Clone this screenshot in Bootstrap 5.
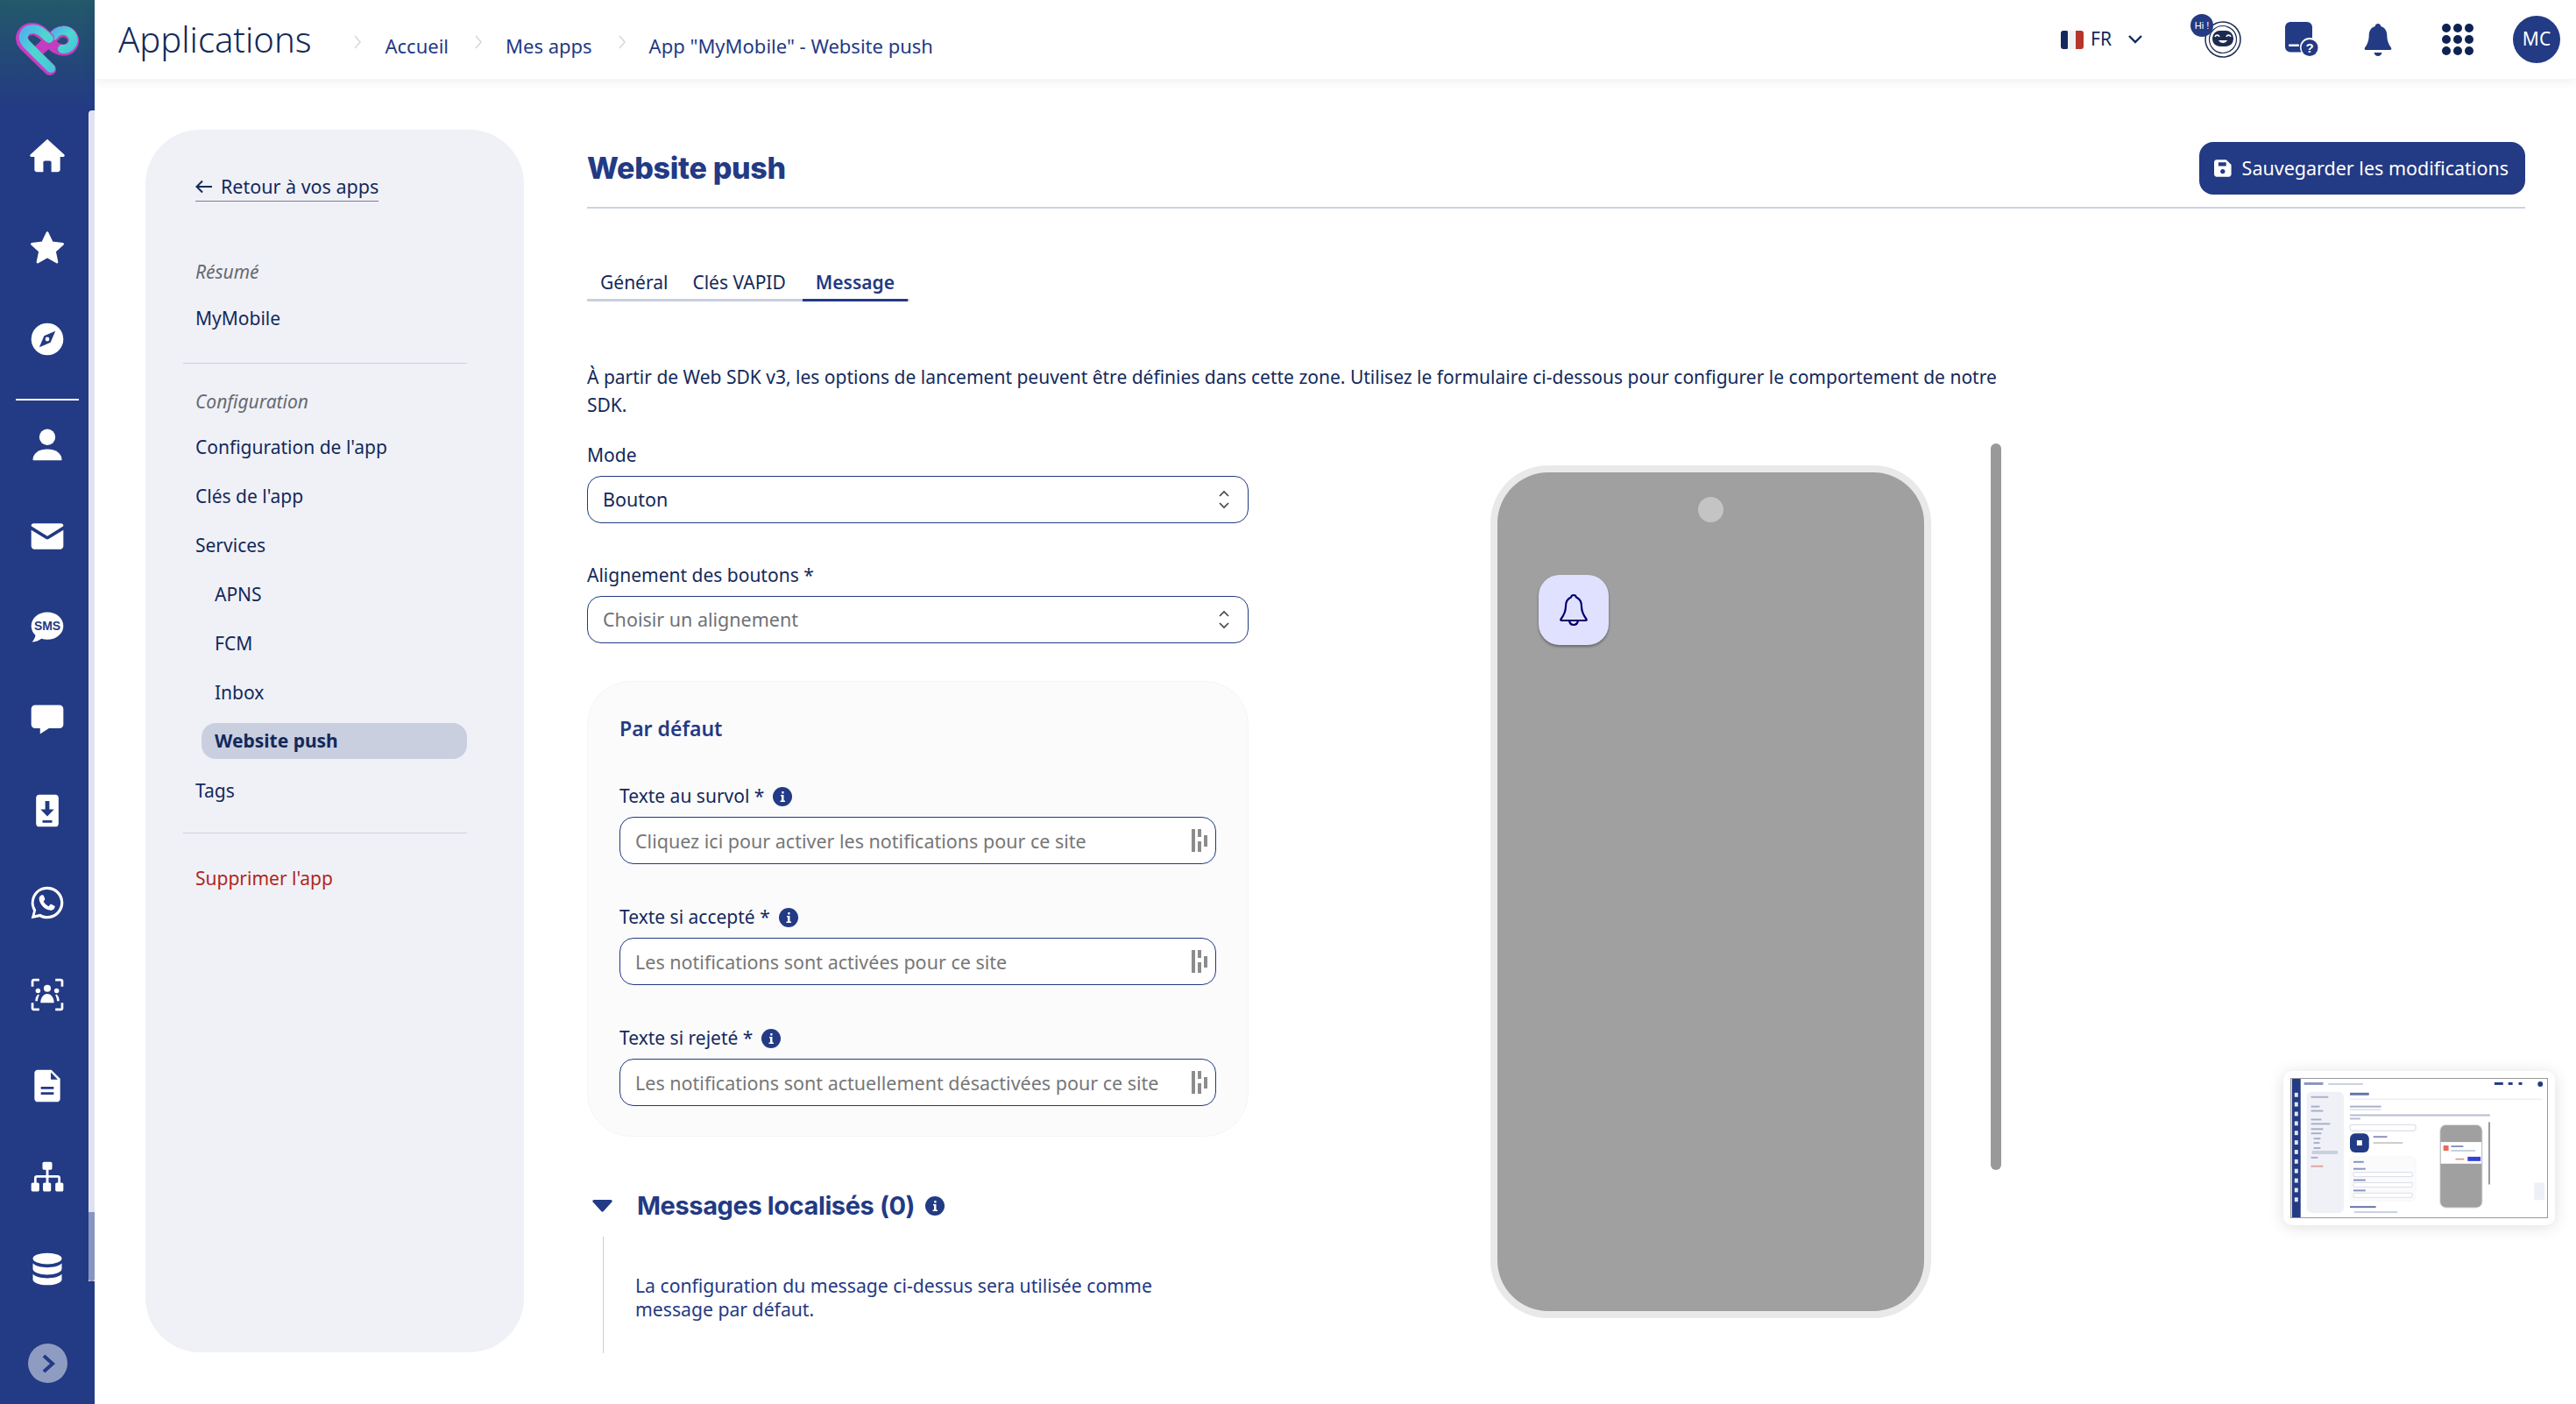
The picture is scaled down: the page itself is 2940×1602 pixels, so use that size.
<!DOCTYPE html>
<html lang="fr">
<head>
    <meta charset="UTF-8">
    <meta name="viewport" content="width=device-width, initial-scale=1.0">
    <title>Applications</title>
    <link href="https://cdn.jsdelivr.net/npm/bootstrap@5.3.2/dist/css/bootstrap.min.css" rel="stylesheet">
    <style>
        html, body { height: 100%; overflow: hidden; }
        body { font-family: "Noto Sans", "Open Sans", sans-serif; font-size: 21px; color: #13295a; background: #fff; }
        .app-shell { width: 2940px; height: 1602px; position: relative; overflow: hidden; }

        /* sidebar */
        .side-rail { width: 108px; height: 1602px; flex: none; background: linear-gradient(180deg, #23596a 0, #233a84 125px); position: relative; }
        .rail-logo { height: 126px; padding-top: 15px; }
        .rail-track { position: absolute; left: 101px; top: 126px; width: 7px; bottom: 140px; background: #e0e3ef; border-radius: 4px 0 0 0; }
        .rail-thumb { position: absolute; left: 0; right: 0; top: 1257px; height: 79px; background: #8a95bf; border-radius: 0 0 4px 4px; }
        .rail-btn { height: 104.6px; display: flex; align-items: center; justify-content: center; }
        .rail-btn svg { width: 44px; height: 44px; fill: #fff; }
        .rail-line { width: 72px; height: 2px; background: #fff; margin: 15px 0 -2px 18px; }
        .rail-toggle { position: absolute; left: 32px; top: 1533px; width: 45px; height: 45px; border-radius: 50%; background: #8f9cc2; display: flex; align-items: center; justify-content: center; }

        /* top bar */
        .top-head { height: 90px; padding: 0 18px 0 27px; background: #fff; box-shadow: 0 2px 12px rgba(20, 30, 70, .08); position: relative; z-index: 2; }
        .top-title { font-size: 40px; font-weight: 300; color: #13295a; line-height: 1; margin: 0 47px 0 0; }
        .crumb-bar { margin: 14px 0 0; font-size: 22px; }
        .crumb-bar .breadcrumb-item { display: flex; align-items: center; padding: 0; color: #233a84; }
        .crumb-bar .breadcrumb-item + .breadcrumb-item { padding: 0; }
        .crumb-bar .breadcrumb-item::before, .crumb-bar .breadcrumb-item + .breadcrumb-item::before { content: ""; float: none; padding: 0; width: 12px; height: 16px; margin: -8px 25px 0 28px; background: url("data:image/svg+xml,%3Csvg xmlns='http://www.w3.org/2000/svg' viewBox='0 0 12 16'%3E%3Cpath d='M3 1l6 7-6 7' fill='none' stroke='%23d5d8de' stroke-width='1.6'/%3E%3C/svg%3E") no-repeat center; }
        .crumb-bar .breadcrumb-item:first-child::before { margin-left: 0; }
        .crumb-bar a { color: #233a84; text-decoration: none; }
        .lang-pick { font-size: 21px; margin-right: 54px; width: 94px; }
        .head-tool { display: block; flex: none; }

        /* left panel */
        .side-panel { width: 432px; height: 1395px; flex: none; margin: 58px 0 0 58px; padding: 49px 65px 0 43px; border-radius: 62px; background: #f0f1f7; }
        .back-link { display: inline-flex; align-items: center; gap: 9px; margin-left: 14px; height: 33px; border-bottom: 1px solid #7b7f8c; color: #13295a; text-decoration: none; font-size: 21.5px; }
        .menu-row { display: block; height: 41px; line-height: 42px; padding-left: 14px; color: #13295a; text-decoration: none; margin-bottom: 15px; white-space: nowrap; }
        .menu-cap { font-style: italic; color: #666a70; }
        .menu-sub { padding-left: 36px; }
        .menu-on { margin-left: 21px; padding-left: 15px; line-height: 41px; font-weight: 700; background: #cacfe0; border-radius: 16px; }
        .menu-sep { margin: 0; opacity: 1; border-top: 1px solid #cdd0e0; }
        .menu-del { color: #b1261c; }

        /* main */
        .main-col { width: 2212px; flex: none; margin: 58px 0 0 72px; }
        .page-head { height: 90px; padding-top: 14px; border-bottom: 2px solid #ccd2e4; }
        .page-title { font-family: "Inter", sans-serif; font-size: 34px; font-weight: 800; color: #233a84; margin: 0; letter-spacing: -.3px; }
        .save-btn { height: 60px; width: 372px; padding: 0 19px 0 17px; background: #233a84; border: 0; border-radius: 16px; font-size: 21.5px; color: #fff; gap: 12px; white-space: nowrap; }
        .save-btn:hover { background: #233a84; color: #fff; }
        .tab-strip { width: 368px; margin: 56px 0 70px; border-bottom: 3px solid #c9cfe0; flex-wrap: nowrap; }
        .tab-strip .nav-link { padding: 0 15px; height: 50px; line-height: 56px; margin-bottom: -3px; border: 0; border-bottom: 3px solid transparent; border-radius: 0; background: none; color: #13295a; white-space: nowrap; }
        .tab-strip .nav-item:nth-child(2) .nav-link { padding: 0 19px 0 13px; }
        .tab-strip .nav-link.active { color: #233a84; font-weight: 600; border-bottom-color: #233a84; background: none; }
        .intro-text { width: 1620px; line-height: 32px; margin: 0 0 28px; }
        .form-col { width: 755px; flex: none; }
        .field-lab { display: flex; align-items: center; gap: 10px; height: 28px; margin-bottom: 9px; color: #13295a; }
        .field-sel, .field-inp { height: 54px; border: 1.5px solid #233a84; border-radius: 16px; font-size: 21.5px; padding: 0 54px 0 17px; color: #13295a; background-color: #fff; }
        .field-sel { background-image: url("data:image/svg+xml,%3Csvg xmlns='http://www.w3.org/2000/svg' viewBox='0 0 14 24'%3E%3Cpath d='M2 8l5-5 5 5M2 16l5 5 5-5' fill='none' stroke='%23444' stroke-width='1.6'/%3E%3C/svg%3E"); background-size: 14px 24px; background-position: right 20px center; }
        .field-sel.is-empty { color: #6f7276; }
        .field-inp::placeholder { color: #777; opacity: 1; }
        .field-box { position: relative; }
        .field-mark { position: absolute; right: 9px; top: 14px; }
        .field-group { margin-bottom: 46px; }
        .default-box { height: 520px; margin: -3px 0 59px; padding: 40px 36px 0; border: 1px solid #f5f5f7; border-radius: 50px; background: #fbfbfc; }
        .default-title { height: 28px; line-height: 26px; font-size: 23px; font-weight: 600; color: #233a84; margin-bottom: 49px; }
        .inner-group { margin-bottom: 47px; }
        .inner-group:last-child { margin-bottom: 0; }
        .local-head { height: 40px; gap: 0; }
        .local-title { font-family: "Inter", sans-serif; font-size: 29px; font-weight: 700; color: #233a84; margin: 0 12px 0 28px; letter-spacing: -.4px; }
        .local-body { margin: 15px 0 0 18px; padding: 42px 20px 37px 36px; border-left: 1px solid #c9cfe0; line-height: 27px; width: 680px; font-size: 21.2px; color: #233a84; }

        /* phone preview */
        .preview-col { padding-left: 276px; }
        .phone-shell { width: 503px; height: 973px; margin-top: 25px; padding: 8px; border-radius: 66px; background: #e9e9e9; flex: none; }
        .phone-screen { height: 100%; padding-top: 28px; border-radius: 58px; background: #9fa09f; position: relative; }
        .phone-cam { width: 29px; height: 29px; margin: 0 auto; border-radius: 50%; background: #c4c4c4; }
        .phone-bell { position: absolute; left: 47px; top: 117px; width: 80px; height: 80px; border-radius: 24px; background: #e0e1ff; box-shadow: 0 2px 3px rgba(0, 0, 0, .35); display: flex; align-items: center; justify-content: center; }
        .preview-bar { width: 12px; height: 829px; margin-left: 68px; border-radius: 6px; background: #999; flex: none; }

        /* floating thumbnail */
        .mini-card { position: absolute; left: 2606px; top: 1222px; width: 310px; height: 176px; padding: 8px; background: #fff; border-radius: 10px; box-shadow: 0 2px 18px rgba(0, 0, 0, .13); }
        .mini-card svg { display: block; width: 294px; height: 160px; border: 1px solid #999; filter: blur(.4px); }
    </style>
</head>

<body>
<div class="app-shell d-flex">
    <!-- barre de navigation à gauche -->
    <aside class="side-rail">
        <div class="rail-logo d-flex justify-content-center">
            <svg width="90" height="80" viewBox="0 0 90 80">
                <defs>
                    <linearGradient id="logoA" x1="0" y1="0" x2="1" y2="1">
                        <stop offset="0" stop-color="#4fb4e8"/><stop offset=".5" stop-color="#4ed8cf"/><stop offset="1" stop-color="#46c8d8"/>
                    </linearGradient>
                </defs>
                <path d="M36 42 52 27C58 19 68 19 73 26 78 34 71 43 62 42 54 41 50 36 45 30" fill="none" stroke="#c43cc0" stroke-width="13" stroke-linecap="round"/>
                <path d="M52 26C58 18 68 18 73 25 78 33 71 42 62 41" fill="none" stroke="url(#logoA)" stroke-width="10" stroke-linecap="round"/>
                <path d="M48 64 19 36C12 28 18 18 28 18 36 18 40 24 46 29" fill="none" stroke="#c83cc4" stroke-width="14" stroke-linecap="round"/>
                <path d="M49 63 21 35C14 27 19 18 29 18 37 18 41 24 47 29" fill="none" stroke="url(#logoA)" stroke-width="10" stroke-linecap="round"/>
            </svg>
        </div>
        <div class="rail-track"><div class="rail-thumb"></div></div>
        <div class="rail-icons">
            <div class="rail-btn"><svg viewBox="0 0 24 24"><path fill-rule="evenodd" d="M12 1.500 22.500 11c.6.600.2 1.500-.6 1.500H20v8c0 1-.7 1.500-1.500 1.500h-13C4.700 22 4 21.500 4 20.500v-8H2.100c-.8 0-1.200-.9-.6-1.500zM10.500 15c-.6 0-1 .4-1 1v6h5v-6c0-.6-.4-1-1-1z"/></svg></div>
            <div class="rail-btn"><svg viewBox="0 0 24 24"><path stroke="#fff" stroke-width="1.500" stroke-linejoin="round" d="m12 2.500 2.900 6.200 6.700.8-5 4.600 1.400 6.700L12 17.400l-6 3.400 1.400-6.700-5-4.600 6.700-.8z"/></svg></div>
            <div class="rail-btn"><svg viewBox="0 0 24 24"><path fill-rule="evenodd" d="M12 2a10 10 0 1 0 0 20 10 10 0 0 0 0-20zm5 5-3 7-7 3 3-7zm-5 3.700a1.300 1.300 0 1 0 0 2.600 1.300 1.300 0 0 0 0-2.600z"/></svg></div>
            <div class="rail-line"></div>
            <div class="rail-btn"><svg viewBox="0 0 24 24"><circle cx="12" cy="7.500" r="5"/><path d="M3 21.500c0-4 4-6.500 9-6.500s9 2.500 9 6.500c0 .5-.3.5-.8.500H3.800c-.5 0-.8 0-.8-.5z"/></svg></div>
            <div class="rail-btn"><svg viewBox="0 0 24 24"><path d="M3.500 4h17c1 0 1.500.6 1.500 1.200 0 .3-.1.5-.4.7L12 11.800 2.400 5.900C2.100 5.700 2 5.500 2 5.200 2 4.600 2.500 4 3.500 4zM2 8l9.200 5.700c.5.300 1.100.3 1.600 0L22 8v10c0 1.100-.9 2-2 2H4c-1.100 0-2-.9-2-2z"/></svg></div>
            <div class="rail-btn"><svg viewBox="0 0 24 24"><path d="M12 2.500c5.500 0 10 3.700 10 8.500s-4.500 8.500-10 8.500c-1.300 0-2.500-.2-3.700-.6-1.500 1.200-3.700 2.100-5.800 2.100 1.100-1.200 2-2.800 2.100-4.200C3.100 15.400 2 13.300 2 11c0-4.800 4.500-8.500 10-8.500z"/><text x="12" y="13.800" text-anchor="middle" font-family="Liberation Sans, sans-serif" font-size="7.600" font-weight="700" fill="#233a84">SMS</text></svg></div>
            <div class="rail-btn"><svg viewBox="0 0 24 24"><path d="M4.500 3h15C21 3 22 4 22 5.500v9.500c0 1.500-1 2.500-2.500 2.500H13L7.500 21v-3.500h-3C3 17.500 2 16.500 2 15V5.500C2 4 3 3 4.500 3z"/></svg></div>
            <div class="rail-btn"><svg viewBox="0 0 24 24"><path fill-rule="evenodd" d="M7 2h10c1.200 0 2 .8 2 2v16c0 1.200-.8 2-2 2H7c-1.200 0-2-.8-2-2V4c0-1.200.8-2 2-2zm3.700 4v5.200H7.800L12 15.500l4.200-4.300h-2.900V6zM9 18v1.500h6V18z"/></svg></div>
            <div class="rail-btn"><svg viewBox="0 0 24 24"><path fill-rule="evenodd" d="M12 2a10 10 0 0 1 0 20c-1.700 0-3.300-.4-4.800-1.200L2 22l1.300-5C2.500 15.500 2 13.800 2 12A10 10 0 0 1 12 2zm0 1.800A8.200 8.200 0 0 0 5 16.500l-.8 3.300 3.400-.9A8.200 8.200 0 1 0 12 3.800z"/><path d="M8.800 7.200c.5 0 .8.100 1 .6l.7 1.700c.1.300 0 .6-.2.800l-.7.9c.7 1.300 1.800 2.400 3.200 3.100l.9-1.100c.2-.2.500-.3.800-.2l1.800.9c.3.100.5.400.4.800-.2 1.300-1.400 2.100-2.600 2.100-3.400-.2-7-3.700-7.200-7.100 0-1.100.7-2.500 1.900-2.500z"/></svg></div>
            <div class="rail-btn"><svg viewBox="0 0 24 24"><path d="M2 7V3.500C2 2.700 2.700 2 3.500 2H7v1.500H3.500V7zM17 2h3.500c.8 0 1.500.7 1.500 1.500V7h-1.500V3.500H17zM2 17h1.500v3.500H7V22H3.500C2.700 22 2 21.300 2 20.500zM20.500 17H22v3.500c0 .8-.7 1.500-1.500 1.500H17v-1.500h3.500z"/><circle cx="12" cy="8" r="2.200"/><circle cx="6.200" cy="9.500" r="1.500"/><circle cx="17.800" cy="9.500" r="1.500"/><path d="M7.800 17c0-3 1.800-5.500 4.200-5.500s4.200 2.500 4.200 5.500zM4.500 16c0-1.800.6-3.500 1.800-4.300l.7.400C6.400 13.300 6 14.600 6 16zM19.500 16c0-1.800-.6-3.500-1.800-4.300l-.7.400c.6 1.200 1 2.500 1 3.900z"/></svg></div>
            <div class="rail-btn"><svg viewBox="0 0 24 24"><path fill-rule="evenodd" d="M6 2h8.500L20 7.500V20c0 1.100-.9 2-2 2H6c-1.100 0-2-.9-2-2V4c0-1.100.9-2 2-2zm8.200 1.500V8h4.300zM8 12.500V14h8v-1.500zM8 16v1.500h8V16z"/></svg></div>
            <div class="rail-btn"><svg viewBox="0 0 24 24"><path d="M10 2h4c.6 0 1 .4 1 1v3c0 .6-.4 1-1 1h-1.200v3.300h5.700c1 0 1.700.7 1.700 1.700v3h.8c.6 0 1 .4 1 1v3.500c0 .6-.4 1-1 1h-3c-.6 0-1-.4-1-1V16c0-.6.4-1 1-1h.7v-3c0-.2-.1-.2-.2-.2h-5.700V15h.5c.6 0 1 .4 1 1v3.500c0 .6-.4 1-1 1h-3c-.6 0-1-.4-1-1V16c0-.6.4-1 1-1h.9v-3.200H5.500c-.1 0-.2 0-.2.200v3H6c.6 0 1 .4 1 1v3.500c0 .6-.4 1-1 1H3c-.6 0-1-.4-1-1V16c0-.6.4-1 1-1h.8v-3c0-1 .7-1.700 1.700-1.700h5.700V7H10c-.6 0-1-.4-1-1V3c0-.6.4-1 1-1z"/></svg></div>
            <div class="rail-btn"><svg viewBox="0 0 24 24"><ellipse cx="12" cy="5.500" rx="9" ry="3.500"/><path d="M3 8.500c1.500 1.700 5 2.500 9 2.500s7.500-.8 9-2.500V12c0 1.900-4 3.500-9 3.500S3 13.900 3 12zM3 15.200c1.500 1.700 5 2.500 9 2.500s7.500-.8 9-2.500v3.300c0 1.900-4 3.500-9 3.500s-9-1.600-9-3.500z"/></svg></div>
        </div>
        <div class="rail-toggle">
            <svg width="20" height="24" viewBox="0 0 20 24"><path d="M5 3l10 9-10 9" fill="none" stroke="#233a84" stroke-width="4"/></svg>
        </div>
    </aside>

    <div class="flex-grow-1">
        <!-- barre du haut -->
        <header class="top-head d-flex align-items-center">
            <h1 class="top-title">Applications</h1>
            <nav aria-label="breadcrumb">
                <ol class="breadcrumb crumb-bar">
                    <li class="breadcrumb-item"><a href="#">Accueil</a></li>
                    <li class="breadcrumb-item"><a href="#">Mes apps</a></li>
                    <li class="breadcrumb-item active">App "MyMobile" - Website push</li>
                </ol>
            </nav>
            <div class="ms-auto d-flex align-items-center">
                <div class="lang-pick d-flex align-items-center">
                    <svg class="head-tool" width="26" height="21" viewBox="0 0 26 21"><rect width="9" height="21" fill="#13295a" rx="3"/><rect x="8" width="10" height="21" fill="#f2f2f5"/><path d="M17 0h6c2 0 3 1 3 3v15c0 2-1 3-3 3h-6z" fill="#b5352b"/></svg>
                    <span class="ms-2">FR</span>
                    <svg class="head-tool ms-auto" width="18" height="12" viewBox="0 0 18 12"><path d="M2 2l7 7 7-7" fill="none" stroke="#13295a" stroke-width="2.400"/></svg>
                </div>
                <svg class="head-tool" width="64" height="60" viewBox="0 0 64 60">
                    <circle cx="37" cy="30" r="20" fill="none" stroke="#1d2b4f" stroke-width="1.500"/>
                    <circle cx="37" cy="30" r="15.500" fill="none" stroke="#1d2b4f" stroke-width="1.200"/>
                    <rect x="25" y="20" width="24" height="18" rx="8.500" fill="#1d2b4f"/>
                    <path d="M32 31c2 4 8 4 10 0z" fill="#fff"/>
                    <path d="M28 27c1-2.500 4-2.500 5 0M41 27c1-2.500 4-2.500 5 0" fill="none" stroke="#fff" stroke-width="1.600"/>
                    <circle cx="13" cy="14" r="13" fill="#233a84"/>
                    <text x="13" y="18" text-anchor="middle" font-family="Liberation Sans, sans-serif" font-size="11" fill="#fff">Hi !</text>
                </svg>
                <svg class="head-tool" style="margin-left:44px" width="38" height="40" viewBox="0 0 38 40"><rect width="31" height="34.500" rx="6" fill="#233a84"/><rect x="4" y="25.500" width="12" height="2.500" rx="1" fill="#fff"/><circle cx="28" cy="29" r="11" fill="#fff"/><circle cx="28" cy="29.500" r="9.500" fill="#233a84"/><text x="28" y="35" text-anchor="middle" font-family="Liberation Sans, sans-serif" font-size="15" font-weight="700" fill="#fff">?</text></svg>
                <svg class="head-tool" style="margin-left:52px" width="32" height="37" viewBox="0 0 32 37"><path d="M16 0c1.800 0 3 1.200 3.300 3 4.700 1.400 7 5.500 7 10.500 0 5 1.200 9 4.700 14 .8 1.200.2 2.500-1.200 2.500H2.200C.8 30 .2 28.700 1 27.500c3.500-5 4.700-9 4.700-14 0-5 2.300-9.100 7-10.500C13 1.200 14.200 0 16 0z" fill="#233a84"/><path d="M11.500 33h9c-.5 2.400-2.300 4-4.500 4s-4-1.600-4.500-4z" fill="#233a84"/></svg>
                <svg class="head-tool" style="margin-left:57px" width="36" height="36" viewBox="0 0 36 36" fill="#0e2353"><circle cx="5" cy="5" r="5"/><circle cx="18" cy="5" r="5"/><circle cx="31" cy="5" r="5"/><circle cx="5" cy="18" r="5"/><circle cx="18" cy="18" r="5"/><circle cx="31" cy="18" r="5"/><circle cx="5" cy="31" r="5"/><circle cx="18" cy="31" r="5"/><circle cx="31" cy="31" r="5"/></svg>
                <div class="rounded-circle d-flex align-items-center justify-content-center text-white flex-none" style="margin-left:45px;width:54px;height:54px;background:#233a84;">MC</div>
            </div>
        </header>

        <div class="d-flex">
            <!-- menu de l'app -->
            <nav class="side-panel">
                <a class="back-link" href="#">
                    <svg width="20" height="16" viewBox="0 0 20 16"><path d="M19 8H2M8 1.500 1.500 8 8 14.500" fill="none" stroke="#13295a" stroke-width="2"/></svg>
                    Retour à vos apps
                </a>
                <div class="menu-row menu-cap" style="margin-top:59px;margin-bottom:12px">Résumé</div>
                <a class="menu-row" style="margin-bottom:31px" href="#">MyMobile</a>
                <hr class="menu-sep">
                <div class="menu-row menu-cap" style="margin-top:22px;margin-bottom:11px">Configuration</div>
                <a class="menu-row" href="#">Configuration de l'app</a>
                <a class="menu-row" href="#">Clés de l'app</a>
                <a class="menu-row" href="#">Services</a>
                <a class="menu-row menu-sub" href="#">APNS</a>
                <a class="menu-row menu-sub" href="#">FCM</a>
                <a class="menu-row menu-sub" href="#">Inbox</a>
                <a class="menu-row menu-on" href="#">Website push</a>
                <a class="menu-row" style="margin-bottom:28px" href="#">Tags</a>
                <hr class="menu-sep">
                <a class="menu-row menu-del" style="margin-top:30px" href="#">Supprimer l'app</a>
            </nav>

            <main class="main-col">
                <div class="page-head d-flex justify-content-between align-items-start">
                    <h2 class="page-title" style="line-height:60px">Website push</h2>
                    <button class="btn save-btn d-flex align-items-center">
                        <svg width="20" height="20" viewBox="0 0 20 20"><path fill-rule="evenodd" d="M3 0h11l6 6v11c0 1.700-1.300 3-3 3H3c-1.700 0-3-1.300-3-3V3c0-1.700 1.300-3 3-3zm2 3v4.500h9V3zm5 8a2.700 2.700 0 1 0 0 5.400 2.700 2.700 0 0 0 0-5.400z" fill="#fff"/></svg>
                        Sauvegarder les modifications
                    </button>
                </div>

                <ul class="nav tab-strip">
                    <li class="nav-item"><a class="nav-link" href="#">Général</a></li>
                    <li class="nav-item"><a class="nav-link" href="#">Clés VAPID</a></li>
                    <li class="nav-item"><a class="nav-link active" href="#">Message</a></li>
                </ul>

                <p class="intro-text">À partir de Web SDK v3, les options de lancement peuvent être définies dans cette zone. Utilisez le formulaire ci-dessous pour configurer le comportement de notre SDK.</p>

                <div class="d-flex align-items-start">
                    <div class="form-col">
                        <div class="field-group">
                            <label class="field-lab">Mode</label>
                            <select class="form-select field-sel"><option>Bouton</option></select>
                        </div>
                        <div class="field-group">
                            <label class="field-lab">Alignement des boutons *</label>
                            <select class="form-select field-sel is-empty"><option>Choisir un alignement</option></select>
                        </div>

                        <div class="default-box">
                            <div class="default-title">Par défaut</div>
                            <div class="inner-group">
                                <label class="field-lab">Texte au survol *
                                    <svg width="22" height="22" viewBox="0 0 22 22"><circle cx="11" cy="11" r="11" fill="#233a84"/><path d="M9 9h3.500v6.500H14V17H8.500v-1.500H10v-5H9zM10.300 5h2.200v2.400h-2.200z" fill="#fff"/></svg>
                                </label>
                                <div class="field-box">
                                    <input class="form-control field-inp" type="text" placeholder="Cliquez ici pour activer les notifications pour ce site">
                                    <svg class="field-mark" width="20" height="26" viewBox="0 0 20 26"><g fill="#8c8c8c"><rect x="1" width="4" height="26"/><rect x="8" width="4" height="9"/><rect x="8" y="14" width="4" height="12"/><rect x="15" y="7" width="4" height="13"/></g></svg>
                                </div>
                            </div>
                            <div class="inner-group">
                                <label class="field-lab">Texte si accepté *
                                    <svg width="22" height="22" viewBox="0 0 22 22"><circle cx="11" cy="11" r="11" fill="#233a84"/><path d="M9 9h3.500v6.500H14V17H8.500v-1.500H10v-5H9zM10.300 5h2.200v2.400h-2.200z" fill="#fff"/></svg>
                                </label>
                                <div class="field-box">
                                    <input class="form-control field-inp" type="text" placeholder="Les notifications sont activées pour ce site">
                                    <svg class="field-mark" width="20" height="26" viewBox="0 0 20 26"><g fill="#8c8c8c"><rect x="1" width="4" height="26"/><rect x="8" width="4" height="9"/><rect x="8" y="14" width="4" height="12"/><rect x="15" y="7" width="4" height="13"/></g></svg>
                                </div>
                            </div>
                            <div class="inner-group">
                                <label class="field-lab">Texte si rejeté *
                                    <svg width="22" height="22" viewBox="0 0 22 22"><circle cx="11" cy="11" r="11" fill="#233a84"/><path d="M9 9h3.500v6.500H14V17H8.500v-1.500H10v-5H9zM10.300 5h2.200v2.400h-2.200z" fill="#fff"/></svg>
                                </label>
                                <div class="field-box">
                                    <input class="form-control field-inp" type="text" placeholder="Les notifications sont actuellement désactivées pour ce site">
                                    <svg class="field-mark" width="20" height="26" viewBox="0 0 20 26"><g fill="#8c8c8c"><rect x="1" width="4" height="26"/><rect x="8" width="4" height="9"/><rect x="8" y="14" width="4" height="12"/><rect x="15" y="7" width="4" height="13"/></g></svg>
                                </div>
                            </div>
                        </div>

                        <div class="local-head d-flex align-items-center">
                            <svg style="margin-left:6px" width="23" height="14" viewBox="0 0 23 14"><path d="M2 0h19c1.500 0 2.200 1.500 1.300 2.600l-9.500 10.500c-.7.700-1.900.7-2.600 0L.7 2.600C-.2 1.500.5 0 2 0z" fill="#233a84"/></svg>
                            <h3 class="local-title">Messages localisés (0)</h3>
                            <svg width="22" height="22" viewBox="0 0 22 22"><circle cx="11" cy="11" r="11" fill="#233a84"/><path d="M9 9h3.500v6.500H14V17H8.500v-1.500H10v-5H9zM10.300 5h2.200v2.400h-2.200z" fill="#fff"/></svg>
                        </div>
                        <div class="local-body">La configuration du message ci-dessus sera utilisée comme message par défaut.</div>
                    </div>

                    <div class="preview-col d-flex align-items-start">
                        <div class="phone-shell">
                            <div class="phone-screen">
                                <div class="phone-cam"></div>
                                <div class="phone-bell">
                                    <svg width="34" height="38" viewBox="0 0 34 38"><path d="M17 2c1.600 0 2.600 1 3 2.500 4.500 1.800 6 6 6 10.500 0 5 1.500 9 5.500 14.500.6.800.2 1.500-.7 1.500H3.200c-.9 0-1.300-.7-.7-1.500C6.500 24 8 20 8 15c0-4.500 1.500-8.700 6-10.500C14.400 3 15.400 2 17 2zM12 31c.5 3.200 2.500 5 5 5s4.500-1.800 5-5" fill="none" stroke="#00006e" stroke-width="2.200"/></svg>
                                </div>
                            </div>
                        </div>
                        <div class="preview-bar"></div>
                    </div>
                </div>
            </main>
        </div>
    </div>

    <!-- vignette flottante -->
    <div class="mini-card">
        <svg viewBox="0 0 294 160">
            <rect width="294" height="160" fill="#fff"/>
            <rect width="10" height="160" fill="#233a84"/>
            <g fill="#e4e6f0"><rect x="3" y="16" width="4" height="5"/><rect x="3" y="27" width="4" height="5"/><rect x="3" y="38" width="4" height="5"/><rect x="3" y="49" width="4" height="5"/><rect x="3" y="60" width="4" height="5"/><rect x="3" y="71" width="4" height="5"/><rect x="3" y="82" width="4" height="5"/><rect x="3" y="93" width="4" height="5"/><rect x="3" y="104" width="4" height="5"/><rect x="3" y="115" width="4" height="5"/><rect x="3" y="126" width="4" height="5"/><rect x="3" y="137" width="4" height="5"/></g>
            <rect x="14" y="4" width="22" height="3" fill="#8a95bf"/><rect x="42" y="5" width="40" height="2" fill="#c9cfe0"/>
            <g fill="#233a84"><rect x="234" y="4" width="10" height="3"/><rect x="250" y="4" width="5" height="3"/><rect x="262" y="4" width="4" height="3"/><circle cx="287" cy="6" r="3"/></g>
            <rect x="17" y="15" width="43" height="140" rx="6" fill="#f0f1f7"/>
            <g fill="#a9afc9"><rect x="22" y="20" width="20" height="2"/><rect x="22" y="31" width="10" height="2"/><rect x="22" y="36" width="14" height="2"/><rect x="22" y="46" width="12" height="2"/><rect x="22" y="51" width="22" height="2"/><rect x="22" y="57" width="14" height="2"/><rect x="22" y="62" width="12" height="2"/><rect x="25" y="68" width="8" height="2"/><rect x="25" y="73" width="7" height="2"/><rect x="25" y="79" width="8" height="2"/><rect x="22" y="90" width="8" height="2"/></g>
            <rect x="23" y="83" width="30" height="4" rx="1" fill="#cacfe0"/><rect x="22" y="100" width="14" height="2" fill="#dca7a2"/>
            <rect x="67" y="16" width="22" height="3" fill="#6675a8"/><rect x="67" y="23" width="222" height="1" fill="#e3e6ef"/>
            <rect x="67" y="31" width="36" height="2" fill="#a9afc9"/><rect x="67" y="35" width="36" height="1" fill="#c9cfe0"/>
            <rect x="67" y="41" width="162" height="2" fill="#b8bdd0"/><rect x="67" y="45" width="12" height="2" fill="#b8bdd0"/>
            <rect x="67" y="53" width="76" height="7" rx="2" fill="#fff" stroke="#b8bdd0" stroke-width=".6"/>
            <rect x="67" y="63" width="22" height="22" rx="6" fill="#233a84"/><rect x="75" y="71" width="6" height="6" fill="#fff"/>
            <rect x="94" y="66" width="16" height="2" fill="#8a95bf"/><rect x="94" y="73" width="34" height="2" fill="#ccc"/>
            <rect x="67" y="90" width="76" height="51" rx="5" fill="#fbfbfc" stroke="#f0f0f3" stroke-width=".5"/>
            <rect x="71" y="95" width="12" height="2" fill="#8a95bf"/>
            <rect x="71" y="103" width="14" height="2" fill="#8a95bf"/><rect x="71" y="108" width="68" height="5" rx="1" fill="#fff" stroke="#b8bdd0" stroke-width=".5"/>
            <rect x="71" y="116" width="14" height="2" fill="#8a95bf"/><rect x="71" y="120" width="68" height="5" rx="1" fill="#fff" stroke="#b8bdd0" stroke-width=".5"/>
            <rect x="71" y="128" width="14" height="2" fill="#8a95bf"/><rect x="71" y="132" width="68" height="5" rx="1" fill="#fff" stroke="#b8bdd0" stroke-width=".5"/>
            <rect x="67" y="147" width="30" height="2" fill="#6675a8"/><rect x="72" y="153" width="50" height="2" fill="#c9cfe0"/>
            <rect x="171" y="53" width="49" height="96" rx="7" fill="#9fa09f" stroke="#e9e9e9"/>
            <rect x="172" y="73" width="47" height="25" fill="#fff"/>
            <rect x="175" y="77" width="6" height="6" fill="#e86a5c"/><rect x="184" y="77" width="14" height="2" fill="#8a95bf"/><rect x="184" y="82" width="28" height="2" fill="#c9cfe0"/>
            <rect x="203" y="90" width="15" height="5" fill="#3341d8"/><rect x="189" y="92" width="10" height="1.500" fill="#e28a80"/>
            <rect x="227" y="50" width="2" height="72" fill="#999"/>
            <rect x="280" y="120" width="12" height="20" fill="#eef0f7"/>
        </svg>
    </div>
</div>

<script src="https://cdn.jsdelivr.net/npm/bootstrap@5.3.2/dist/js/bootstrap.bundle.min.js"></script>
</body>
</html>
